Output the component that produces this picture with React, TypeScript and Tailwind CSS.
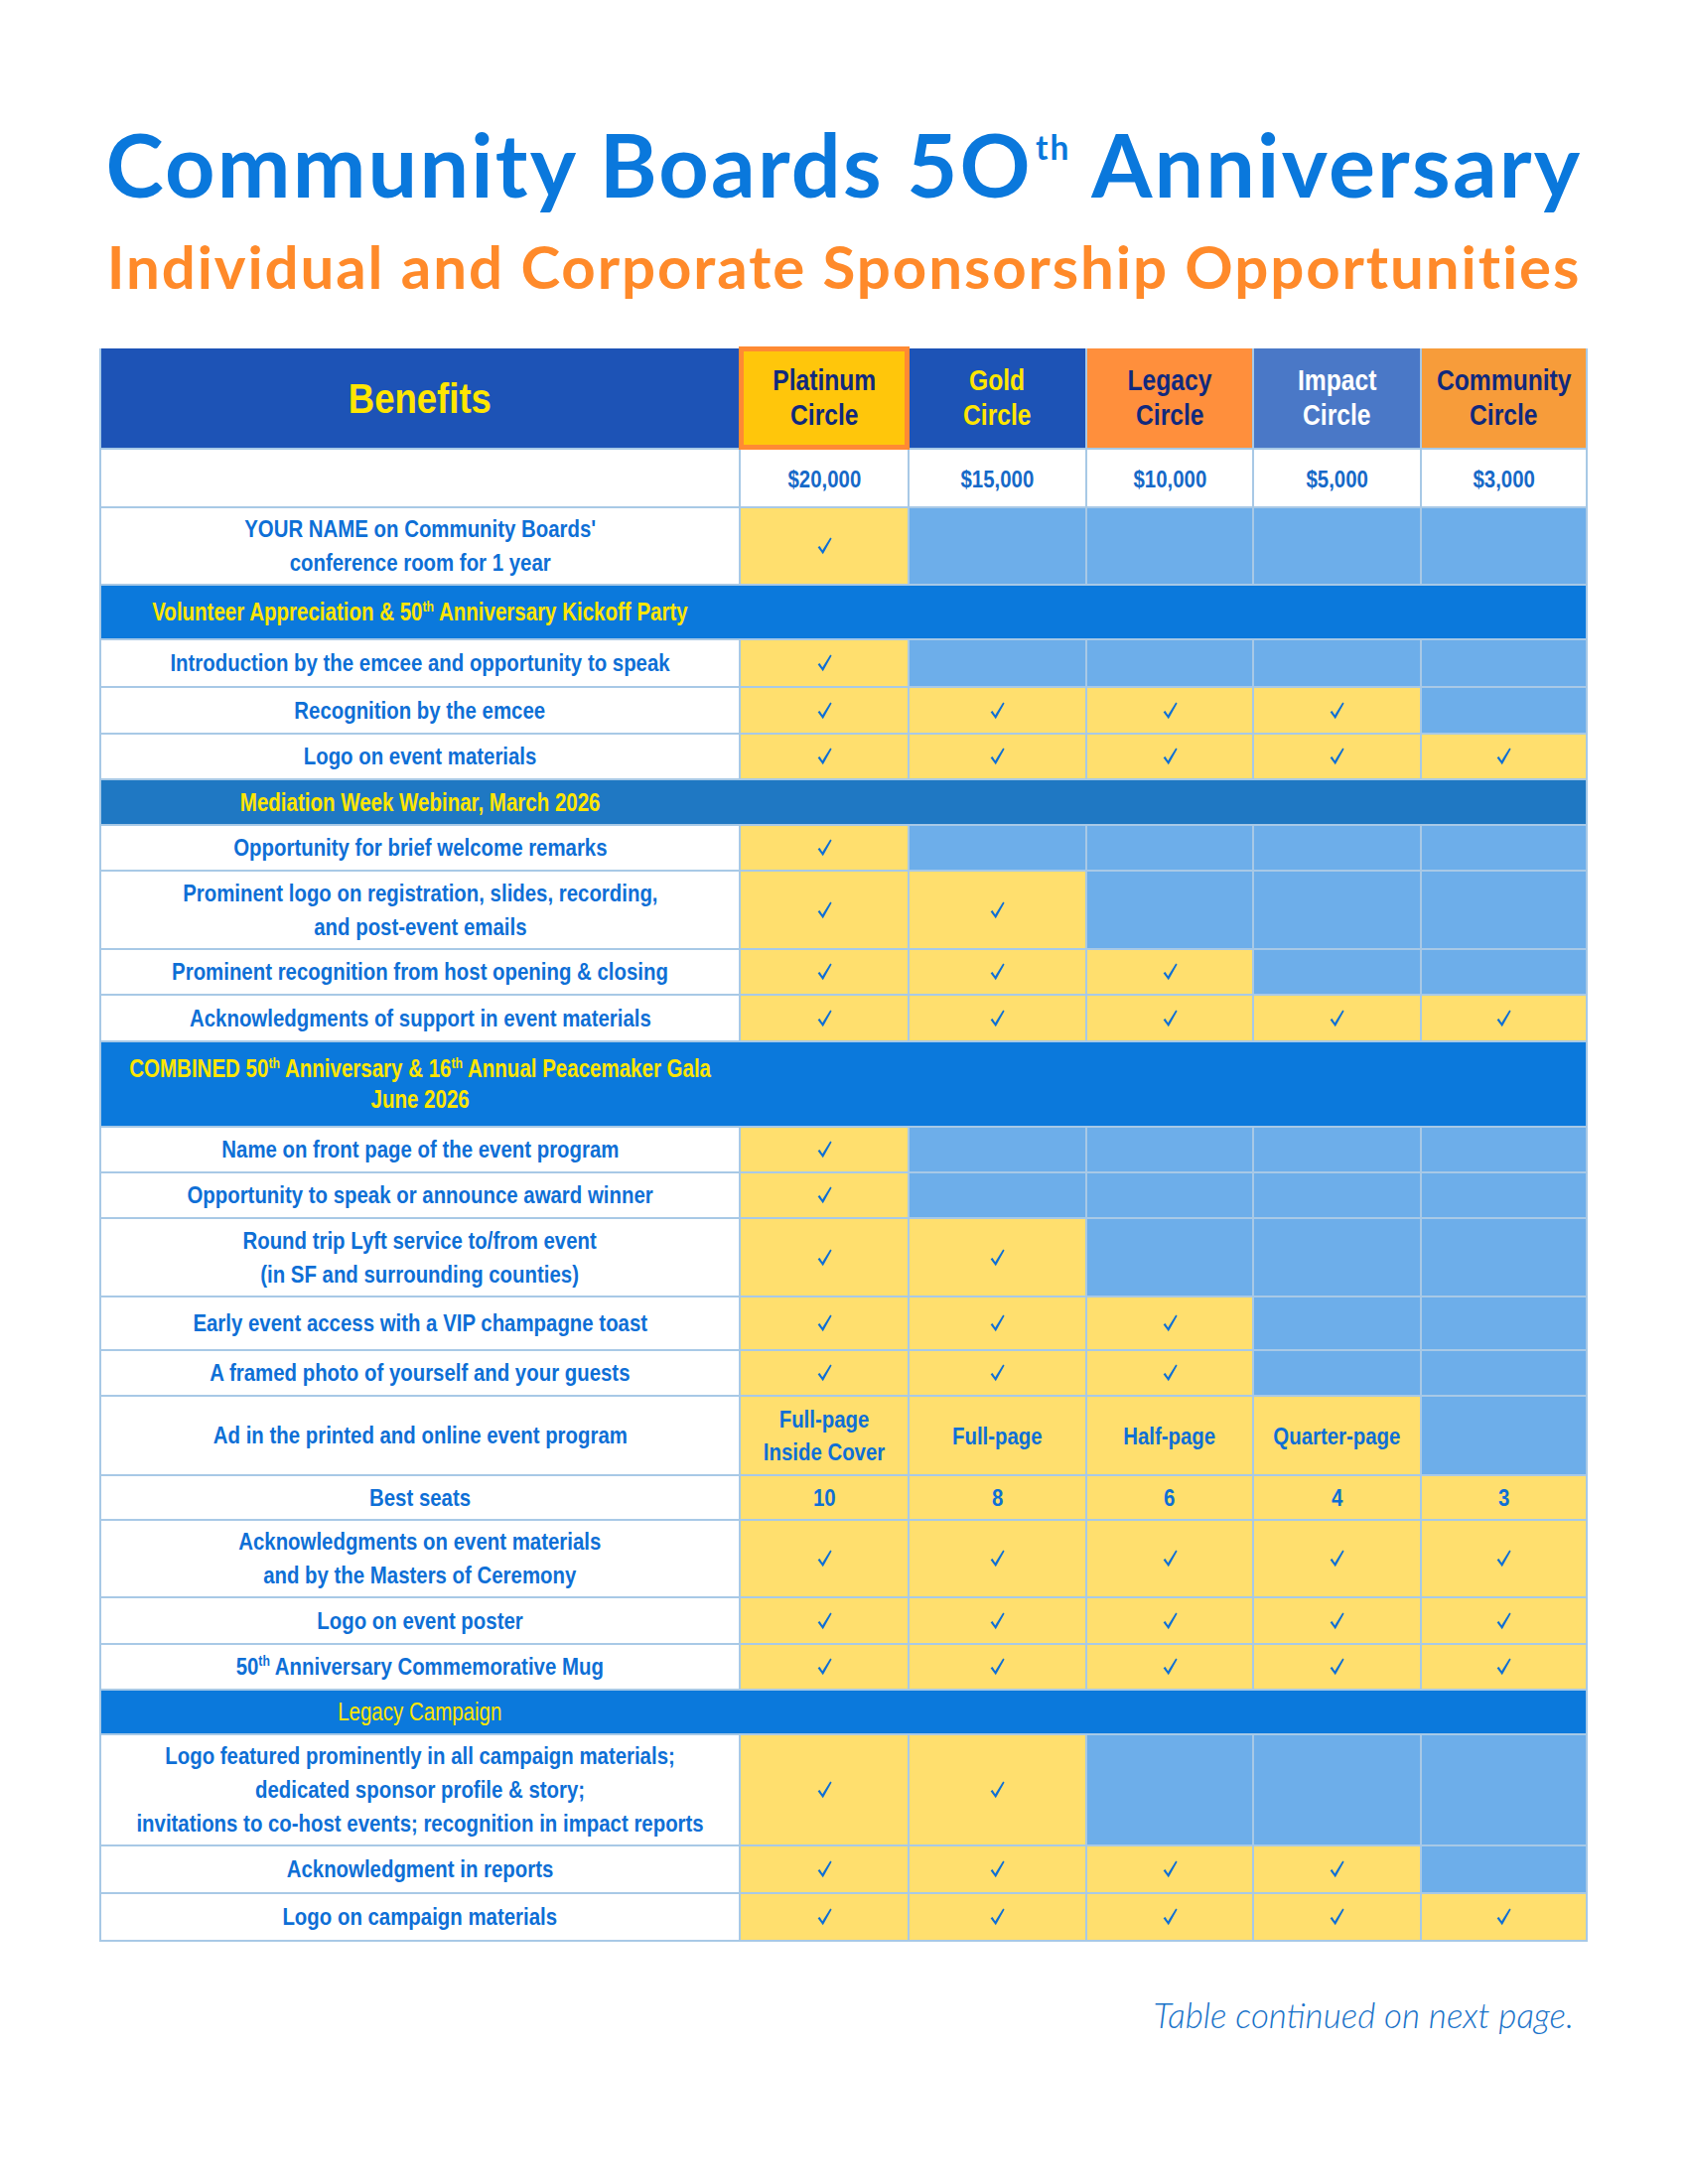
import React from "react";

type Mark = string;

type Row =
  | { kind: "section"; label: React.ReactNode; h: string; bg: string; weight: string }
  | { kind: "row"; label: React.ReactNode; h: string; cells: Mark[] };

const Th = () => <sup className="text-[60%] top-[-0.6em]">th</sup>;

// Liberation Sans squeezed horizontally stands in for the condensed face of the original
function Narrow({
  children,
  scale = "scale-x-[0.85]",
  className = "",
}: {
  children: React.ReactNode;
  scale?: string;
  className?: string;
}) {
  return <span className={`inline-block whitespace-nowrap text-center ${scale} ${className}`}>{children}</span>;
}

const rows: Row[] = [
  {
    kind: "row",
    h: "h-[76px]",
    label: (
      <>
        YOUR NAME on Community Boards'
        <br />
        conference room for 1 year
      </>
    ),
    cells: ["y", "b", "b", "b", "b"],
  },
  {
    kind: "section",
    h: "h-[53px]",
    bg: "bg-[#0b79dc]",
    weight: "font-bold",
    label: (
      <>
        Volunteer Appreciation &amp; 50<Th /> Anniversary Kickoff Party
      </>
    ),
  },
  { kind: "row", h: "h-[46px]", label: "Introduction by the emcee and opportunity to speak", cells: ["y", "b", "b", "b", "b"] },
  { kind: "row", h: "h-[45px]", label: "Recognition by the emcee", cells: ["y", "y", "y", "y", "b"] },
  { kind: "row", h: "h-[44px]", label: "Logo on event materials", cells: ["y", "y", "y", "y", "y"] },
  { kind: "section", h: "h-[44px]", bg: "bg-[#1f78c3]", weight: "font-bold", label: "Mediation Week Webinar, March 2026" },
  { kind: "row", h: "h-[44px]", label: "Opportunity for brief welcome remarks", cells: ["y", "b", "b", "b", "b"] },
  {
    kind: "row",
    h: "h-[77px]",
    label: (
      <>
        Prominent logo on registration, slides, recording,
        <br />
        and post-event emails
      </>
    ),
    cells: ["y", "y", "b", "b", "b"],
  },
  { kind: "row", h: "h-[44px]", label: "Prominent recognition from host opening & closing", cells: ["y", "y", "y", "b", "b"] },
  { kind: "row", h: "h-[45px]", label: "Acknowledgments of support in event materials", cells: ["y", "y", "y", "y", "y"] },
  {
    kind: "section",
    h: "h-[84px]",
    bg: "bg-[#0b79dc]",
    weight: "font-bold",
    label: (
      <>
        COMBINED 50<Th /> Anniversary &amp; 16<Th /> Annual Peacemaker Gala
        <br />
        June 2026
      </>
    ),
  },
  { kind: "row", h: "h-[44px]", label: "Name on front page of the event program", cells: ["y", "b", "b", "b", "b"] },
  { kind: "row", h: "h-[44px]", label: "Opportunity to speak or announce award winner", cells: ["y", "b", "b", "b", "b"] },
  {
    kind: "row",
    h: "h-[77px]",
    label: (
      <>
        Round trip Lyft service to/from event
        <br />
        (in SF and surrounding counties)
      </>
    ),
    cells: ["y", "y", "b", "b", "b"],
  },
  { kind: "row", h: "h-[52px]", label: "Early event access with a VIP champagne toast", cells: ["y", "y", "y", "b", "b"] },
  { kind: "row", h: "h-[44px]", label: "A framed photo of yourself and your guests", cells: ["y", "y", "y", "b", "b"] },
  {
    kind: "row",
    h: "h-[78px]",
    label: "Ad in the printed and online event program",
    cells: ["Full-page\nInside Cover", "Full-page", "Half-page", "Quarter-page", "b"],
  },
  { kind: "row", h: "h-[43px]", label: "Best seats", cells: ["10", "8", "6", "4", "3"] },
  {
    kind: "row",
    h: "h-[76px]",
    label: (
      <>
        Acknowledgments on event materials
        <br />
        and by the Masters of Ceremony
      </>
    ),
    cells: ["y", "y", "y", "y", "y"],
  },
  { kind: "row", h: "h-[45px]", label: "Logo on event poster", cells: ["y", "y", "y", "y", "y"] },
  {
    kind: "row",
    h: "h-[44px]",
    label: (
      <>
        50<Th /> Anniversary Commemorative Mug
      </>
    ),
    cells: ["y", "y", "y", "y", "y"],
  },
  { kind: "section", h: "h-[43px]", bg: "bg-[#0b79dc]", weight: "font-normal", label: "Legacy Campaign" },
  {
    kind: "row",
    h: "h-[110px]",
    label: (
      <>
        Logo featured prominently in all campaign materials;
        <br />
        dedicated sponsor profile &amp; story;
        <br />
        invitations to co-host events; recognition in impact reports
      </>
    ),
    cells: ["y", "y", "b", "b", "b"],
  },
  { kind: "row", h: "h-[46px]", label: "Acknowledgment in reports", cells: ["y", "y", "y", "y", "b"] },
  { kind: "row", h: "h-[46px]", label: "Logo on campaign materials", cells: ["y", "y", "y", "y", "y"] },
];

function Check() {
  return (
    <svg width="15" height="18" viewBox="0 0 14 17" className="text-[#0e6fd6]">
      <path d="M0.5 9.7 L2.3 8.6 L4.9 12.4 L12.4 0.5 L13.7 1.4 L5.4 16.3 Z" fill="currentColor" />
    </svg>
  );
}

function Cell({ mark, h }: { mark: Mark; h: string }) {
  if (mark === "b") return <div className={`${h} bg-[#6daeea]`} />;
  return (
    <div className={`${h} bg-[#ffdf6e] flex items-center justify-center leading-[33px]`}>
      {mark === "y" ? <Check /> : <Narrow className="whitespace-pre-line">{mark}</Narrow>}
    </div>
  );
}

const tiers = [
  { name: "Platinum", cls: "bg-[#ffc60b] text-[#10297e] relative z-10 outline-[5px] outline-[#ff8a33] -outline-offset-[3px]" },
  { name: "Gold", cls: "bg-[#1d53b6] text-[#ffe600]" },
  { name: "Legacy", cls: "bg-[#ff8f3c] text-[#10297e]" },
  { name: "Impact", cls: "bg-[#4a78c7] text-white" },
  { name: "Community", cls: "bg-[#f79c3a] text-[#10297e]" },
];

const prices = ["$20,000", "$15,000", "$10,000", "$5,000", "$3,000"];

export default function App() {
  return (
    <main className="min-h-[2200px] bg-white pt-[121px]">
      <h1 className="[font-family:Lato,sans-serif] font-bold text-center text-[88px] leading-none text-[#0a78dc] tracking-[2.2px]">
        Community Boards 5O<sup className="text-[38%] top-[-1.15em] ml-[3px]">th</sup> Anniversary
      </h1>
      <h2 className="[font-family:Lato,sans-serif] font-bold text-center text-[60px] leading-none text-[#ff8a2a] mt-[29px] tracking-[1.9px]">
        Individual and Corporate Sponsorship Opportunities
      </h2>

      <div className="[font-family:'Liberation_Sans',Arial,sans-serif] font-bold text-[#0e6fd6] text-[24px] mt-[53px] ml-[100px] w-[1499px] grid grid-cols-[642px_168px_177px_166px_167px_165px] gap-[2px] bg-[#a8c9e6] border-x-2 border-b-2 border-[#a8c9e6]">
        <div className="h-[100px] bg-[#1d53b6] text-[#ffe600] text-[42px] flex items-center justify-center">
          <Narrow scale="scale-x-[0.87]">Benefits</Narrow>
        </div>
        {tiers.map((t) => (
          <div key={t.name} className={`h-[100px] ${t.cls} text-[29px] leading-[35px] flex flex-col items-center justify-center`}>
            <Narrow>{t.name}</Narrow>
            <Narrow>Circle</Narrow>
          </div>
        ))}

        <div className="h-[57px] bg-white" />
        {prices.map((p) => (
          <div key={p} className="h-[57px] bg-white flex items-center justify-center text-[#1669c8] pt-[3px]">
            <Narrow>{p}</Narrow>
          </div>
        ))}

        {rows.map((r, i) =>
          r.kind === "section" ? (
            <div key={i} className={`col-span-6 ${r.h} ${r.bg} flex items-center`}>
              <div className={`w-[642px] flex justify-center text-[#ffe600] text-[25px] leading-[31px] ${r.weight}`}>
                <Narrow scale="scale-x-[0.82]">{r.label}</Narrow>
              </div>
            </div>
          ) : (
            <React.Fragment key={i}>
              <div className={`${r.h} bg-white flex items-center justify-center leading-[34px]`}>
                <Narrow>{r.label}</Narrow>
              </div>
              {r.cells.map((c, j) => (
                <Cell key={j} mark={c} h={r.h} />
              ))}
            </React.Fragment>
          )
        )}
      </div>

      <p className="[font-family:Lato,sans-serif] font-light italic text-[35px] leading-none text-[#1a73c9] mt-[56px] ml-[100px] w-[1485px] text-right">
        Table continued on next page.
      </p>
    </main>
  );
}
